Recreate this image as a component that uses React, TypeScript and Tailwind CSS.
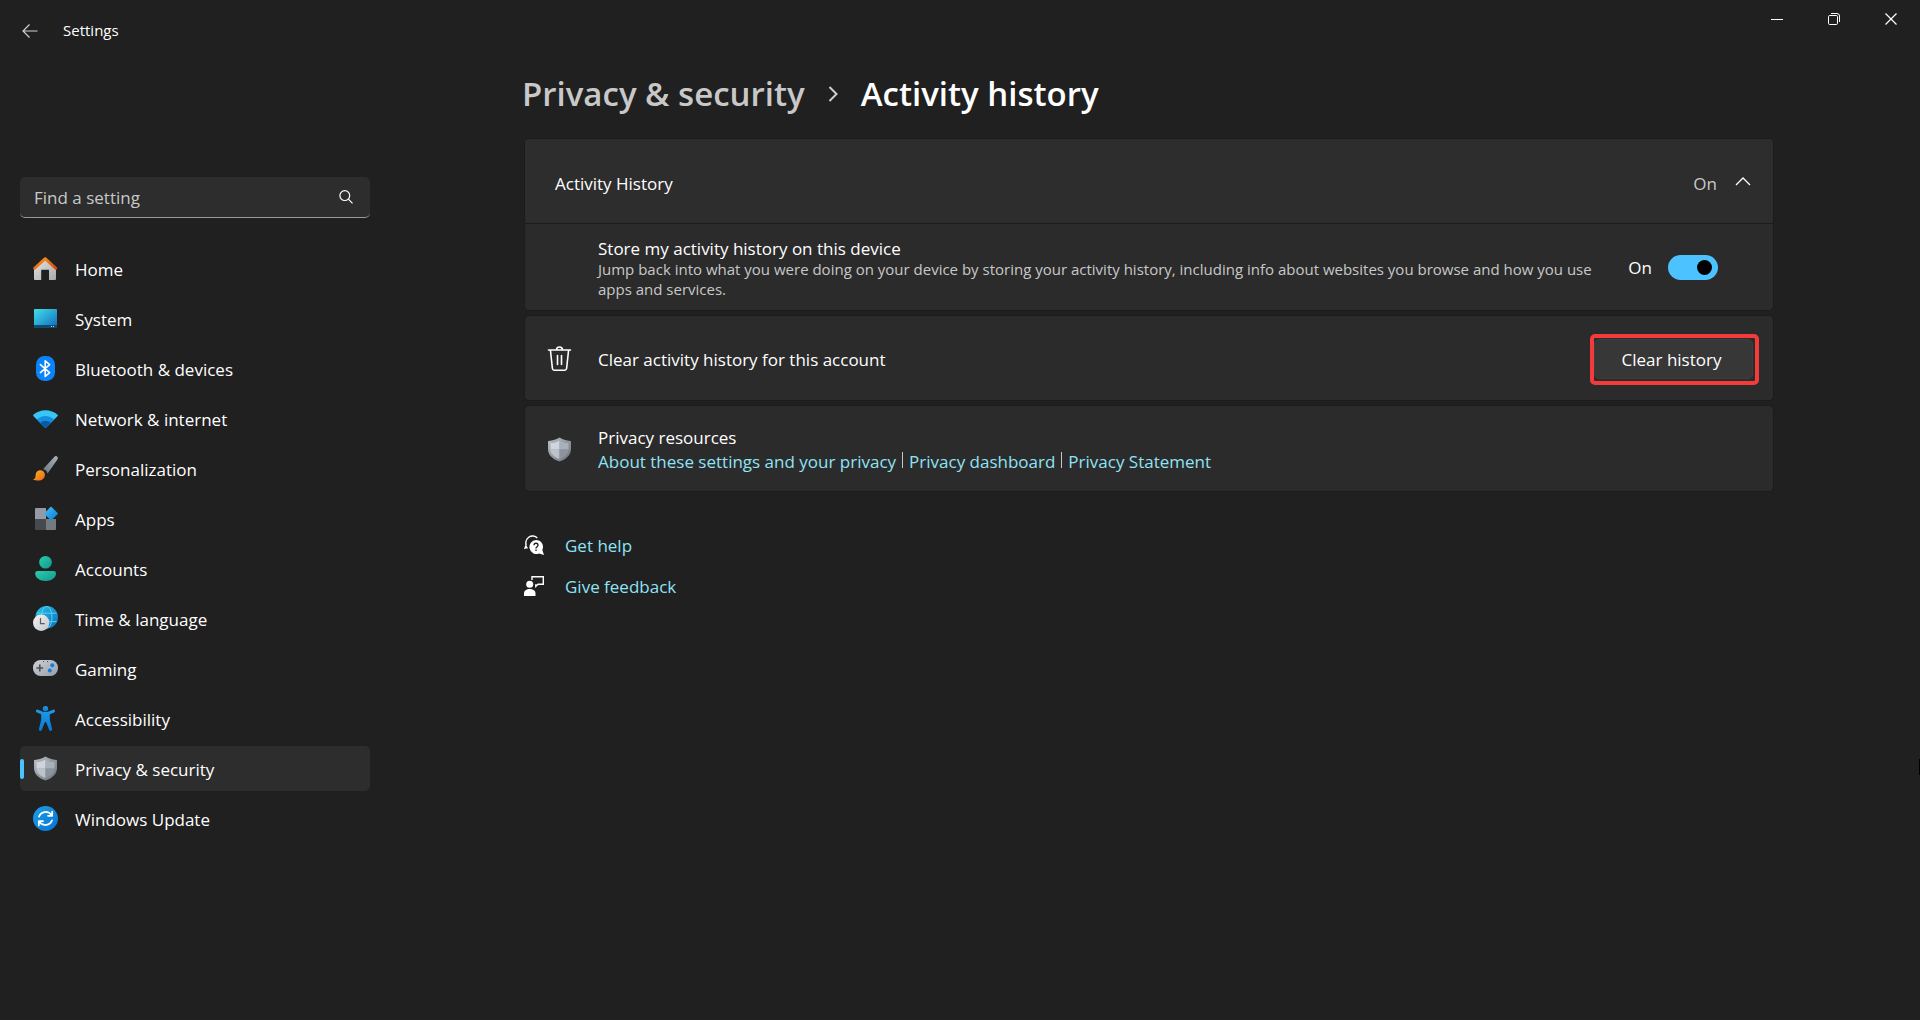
import React, { useState } from 'react';

interface NavItem {
  label: string;
  icon: React.ReactNode;
}

function HomeIcon() {
  return (
    <svg viewBox="0 0 25 25" className="size-[25px]" aria-hidden="true">
      <defs>
        <linearGradient id="home-wall" x1="0" y1="0" x2="1" y2="1">
          <stop offset="0" stopColor="#e4e4e4" />
          <stop offset="1" stopColor="#a8a8a8" />
        </linearGradient>
        <linearGradient id="home-roof" x1="0" y1="0" x2="1" y2="1">
          <stop offset="0" stopColor="#fb9a1c" />
          <stop offset="1" stopColor="#d9480f" />
        </linearGradient>
      </defs>
      <path d="M12.2 3.5 23 13.5V23a1 1 0 0 1-1 1h-6v-9.6a.6.6 0 0 0-.6-.6H8.8a.6.6 0 0 0-.6.6V24H2a1 1 0 0 1-1-1v-9.5z" fill="url(#home-wall)" />
      <path d="M1.6 12.3 12.2 2.6 22.8 12.3" fill="none" stroke="url(#home-roof)" strokeWidth="2.8" strokeLinecap="round" strokeLinejoin="round" />
    </svg>
  );
}

function SystemIcon() {
  return (
    <svg viewBox="0 0 25 25" className="size-[25px]" aria-hidden="true">
      <defs>
        <linearGradient id="sys-screen" x1="0" y1="0" x2="1" y2="1">
          <stop offset="0" stopColor="#3de0e6" />
          <stop offset="0.5" stopColor="#2aa5d4" />
          <stop offset="1" stopColor="#1267b8" />
        </linearGradient>
      </defs>
      <rect x="1" y="3" width="23" height="19" rx="0.8" fill="url(#sys-screen)" />
      <path d="M1 19h23v2.2a.8.8 0 0 1-.8.8H1.8a.8.8 0 0 1-.8-.8z" fill="#0f4a70" />
      <path d="M18 20.5h1M20 20.5h1" stroke="#b8e6f5" strokeWidth="1" />
    </svg>
  );
}

function BluetoothIcon() {
  return (
    <svg viewBox="0 0 25 25" className="size-[25px]" aria-hidden="true">
      <rect x="3" y="0" width="19" height="25" rx="8.5" fill="#0a84f8" />
      <path d="M7.4 8.6 16.6 16.6 12.2 20.4V4.8L16.6 8.6 7.4 16.6" fill="none" stroke="#fff" strokeWidth="1.6" strokeLinejoin="round" strokeLinecap="round" />
    </svg>
  );
}

function NetworkIcon() {
  return (
    <svg viewBox="0 0 25 25" className="size-[25px]" aria-hidden="true">
      <path d="M.4 8.8C7 2.6 18 2.6 24.6 8.8c.4.4.4.8.1 1.1L13.2 21.4a1 1 0 0 1-1.4 0L.3 9.9C0 9.6 0 9.2.4 8.8z" fill="#38c6f4" />
      <path d="M3.9 13.5c4.8-4.8 12.4-4.8 17.2 0l-7.9 7.9a1 1 0 0 1-1.4 0z" fill="#1490df" />
      <path d="M7.3 16.9c2.9-2.9 7.5-2.9 10.4 0l-4.5 4.5a1 1 0 0 1-1.4 0z" fill="#0c59a4" />
    </svg>
  );
}

function PersonalizationIcon() {
  return (
    <svg viewBox="0 0 25 25" className="size-[25px]" aria-hidden="true">
      <defs>
        <linearGradient id="brush-handle" x1="0" y1="1" x2="1" y2="0">
          <stop offset="0" stopColor="#6d757d" />
          <stop offset="1" stopColor="#a9b3bc" />
        </linearGradient>
        <linearGradient id="brush-tip" x1="0" y1="0" x2="1" y2="1">
          <stop offset="0" stopColor="#fcb32c" />
          <stop offset="1" stopColor="#e8670d" />
        </linearGradient>
      </defs>
      <path d="M24.2.6c.8.8.8 1.9.2 2.8L14.6 17.4c-.8-2.3-2.2-3.7-4.4-4.4L21.4.7c.8-.8 2-.9 2.8-.1z" fill="url(#brush-handle)" />
      <path d="M2.6 19.2c.2-3.5 2.5-5.2 5.2-4.9 2.5.3 4.2 2.4 4.1 4.8-.1 3.6-2.8 5.5-6.4 5.5-2.2 0-4.2-.3-5.5-1.1 1.8-.4 2.5-1.9 2.6-4.3z" fill="url(#brush-tip)" />
    </svg>
  );
}

function AppsIcon() {
  return (
    <svg viewBox="0 0 25 25" className="size-[25px]" aria-hidden="true">
      <defs>
        <linearGradient id="apps-diamond" x1="0" y1="0" x2="1" y2="1">
          <stop offset="0" stopColor="#41c4f7" />
          <stop offset="1" stopColor="#0b78d4" />
        </linearGradient>
      </defs>
      <path d="M3 2h10v11H2V3a1 1 0 0 1 1-1z" fill="#969ba3" />
      <path d="M2 13h11v11H3a1 1 0 0 1-1-1z" fill="#46494d" />
      <path d="M13 13h10v10a1 1 0 0 1-1 1h-9z" fill="#747a82" />
      <path d="M18.1.8a.9.9 0 0 1 .6.3l5.9 5.8a.9.9 0 0 1 0 1.3l-5.9 5.9a.9.9 0 0 1-1.3 0l-5.8-5.9a.9.9 0 0 1 0-1.3l5.8-5.8a.9.9 0 0 1 .7-.3z" fill="url(#apps-diamond)" />
    </svg>
  );
}

function AccountsIcon() {
  return (
    <svg viewBox="0 0 25 25" className="size-[25px]" aria-hidden="true">
      <defs>
        <linearGradient id="acct" x1="0" y1="0" x2="1" y2="1">
          <stop offset="0" stopColor="#2bcdb0" />
          <stop offset="1" stopColor="#10988a" />
        </linearGradient>
      </defs>
      <circle cx="12.5" cy="6.3" r="6.3" fill="url(#acct)" />
      <path d="M4.5 15h16.2A2.3 2.3 0 0 1 23 17.3c0 4.6-4.4 7.7-10.4 7.7S2.2 21.9 2.2 17.3A2.3 2.3 0 0 1 4.5 15z" fill="url(#acct)" />
    </svg>
  );
}

function TimeIcon() {
  return (
    <svg viewBox="0 0 25 25" className="size-[25px]" aria-hidden="true">
      <defs>
        <linearGradient id="globe" x1="0" y1="0" x2="1" y2="1">
          <stop offset="0" stopColor="#2cc3e6" />
          <stop offset="1" stopColor="#0f6cc0" />
        </linearGradient>
        <linearGradient id="clock" x1="0" y1="0" x2="1" y2="1">
          <stop offset="0" stopColor="#f4f4f4" />
          <stop offset="1" stopColor="#c4c6c9" />
        </linearGradient>
      </defs>
      <circle cx="13.7" cy="11.3" r="11.3" fill="url(#globe)" />
      <g fill="none" stroke="#4fd6ee" strokeWidth="1">
        <ellipse cx="13.7" cy="11.3" rx="5.3" ry="11" />
        <path d="M3.8 7.2h19.8M3 15.6h20.6" />
      </g>
      <circle cx="8.2" cy="16.8" r="8.2" fill="url(#clock)" />
      <path d="M7.5 12v5.7h4.2" fill="none" stroke="#5a5d61" strokeWidth="1.2" />
    </svg>
  );
}

function GamingIcon() {
  return (
    <svg viewBox="0 0 25 25" className="size-[25px]" aria-hidden="true">
      <defs>
        <linearGradient id="pad" x1="0" y1="0" x2="1" y2="1">
          <stop offset="0" stopColor="#cfd3d8" />
          <stop offset="1" stopColor="#969da5" />
        </linearGradient>
      </defs>
      <rect x="0" y="4" width="25" height="16" rx="7.5" fill="url(#pad)" />
      <path d="M6.8 8.6v6.8M3.4 12h6.8" stroke="#4c5055" strokeWidth="1.6" />
      <circle cx="19.3" cy="9.3" r="2" fill="#0f7fdc" />
      <circle cx="16.8" cy="14.4" r="2" fill="#0f7fdc" />
      <path d="M10 5.6h1M14 5.6h1" stroke="#4c5055" strokeWidth="1" />
    </svg>
  );
}

function AccessibilityIcon() {
  return (
    <svg viewBox="0 0 25 25" className="size-[25px]" aria-hidden="true">
      <defs>
        <linearGradient id="a11y" x1="0" y1="0" x2="0" y2="1">
          <stop offset="0" stopColor="#1d9bea" />
          <stop offset="1" stopColor="#0878d6" />
        </linearGradient>
      </defs>
      <circle cx="12.5" cy="2.8" r="2.7" fill="url(#a11y)" />
      <path d="M3.1 4.6c.3-.8 1.1-1.2 1.9-.9l4.3 1.7c2.1.8 4.3.8 6.4 0L20 3.7c.8-.3 1.6.1 1.9.9.3.8-.1 1.6-.9 1.9l-4.2 1.8v5.5l2.3 9.2c.2.8-.3 1.6-1.1 1.9-.8.2-1.6-.3-1.9-1.1l-2.7-7.1c-.3-.8-1.5-.8-1.8 0l-2.7 7.1c-.3.8-1.1 1.3-1.9 1.1-.8-.3-1.3-1.1-1.1-1.9l2.3-9.2V8.300L4 6.5c-.8-.3-1.2-1.1-.9-1.9z" fill="url(#a11y)" />
    </svg>
  );
}

function ShieldIcon({ id }: { id: string }) {
  return (
    <svg viewBox="0 0 25 25" className="size-[25px]" aria-hidden="true">
      <defs>
        <linearGradient id={id} x1="0" y1="0" x2="1" y2="1">
          <stop offset="0" stopColor="#b9c0c8" />
          <stop offset="1" stopColor="#6a727a" />
        </linearGradient>
      </defs>
      <path d="M12.5.6c2.8 2 6.5 3.2 11 3.3.3 0 .5.2.5.5V12c0 5.8-4.3 10.2-11.5 12.6C5.3 22.2 1 17.8 1 12V4.4c0-.3.2-.5.5-.5C6 3.8 9.7 2.6 12.5.6z" fill={`url(#${id})`} />
      <path d="M12.5 3.4v9.2h-9V6.1c3.5-.2 6.5-1.1 9-2.7z" fill="#d0d5dd" />
      <path d="M12.5 3.4c2.5 1.6 5.5 2.5 9 2.7v6.5h-9z" fill="#a9b0ba" />
      <path d="M3.5 12.5h9v9.6c-5.5-2.2-9-5.5-9-9.6z" fill="#bcc3cc" />
      <path d="M21.5 12.5h-9v9.6c5.5-2.2 9-5.5 9-9.6z" fill="#8c949e" />
    </svg>
  );
}

function UpdateIcon() {
  return (
    <svg viewBox="0 0 25 25" className="size-[25px]" aria-hidden="true">
      <defs>
        <linearGradient id="update" x1="0" y1="0" x2="1" y2="1">
          <stop offset="0" stopColor="#1ea0e6" />
          <stop offset="1" stopColor="#0473d6" />
        </linearGradient>
      </defs>
      <circle cx="12.5" cy="12.5" r="12.5" fill="url(#update)" />
      <g fill="none" stroke="#fff" strokeWidth="1.7" strokeLinecap="round" strokeLinejoin="round">
        <path d="M6 10.6C8 5.3 15 4.2 18.8 9.2M19.2 5.6v4.2H15" />
        <path d="M19 14.4C17 19.7 10 20.8 6.2 15.8M5.8 19.4v-4.2H10" />
      </g>
    </svg>
  );
}

const navItems: NavItem[] = [
  { label: 'Home', icon: <HomeIcon /> },
  { label: 'System', icon: <SystemIcon /> },
  { label: 'Bluetooth & devices', icon: <BluetoothIcon /> },
  { label: 'Network & internet', icon: <NetworkIcon /> },
  { label: 'Personalization', icon: <PersonalizationIcon /> },
  { label: 'Apps', icon: <AppsIcon /> },
  { label: 'Accounts', icon: <AccountsIcon /> },
  { label: 'Time & language', icon: <TimeIcon /> },
  { label: 'Gaming', icon: <GamingIcon /> },
  { label: 'Accessibility', icon: <AccessibilityIcon /> },
  { label: 'Privacy & security', icon: <ShieldIcon id="nav-shield" /> },
  { label: 'Windows Update', icon: <UpdateIcon /> },
];

function TitleBar() {
  return (
    <header className="flex h-[62px] items-start justify-between">
      <div className="flex h-full items-center pl-[22px] text-[15px]">
        <button type="button" aria-label="Back">
          <svg viewBox="0 0 16 16" className="size-4" fill="none" stroke="#d0d0d0" strokeWidth="1.2" aria-hidden="true">
            <path d="M15.5 8H1M7.5 1.5 1 8l6.5 6.5" />
          </svg>
        </button>
        <span className="ml-[25px] pb-0.5">Settings</span>
      </div>
      <div className="flex pr-px">
        <button type="button" aria-label="Minimize" className="flex h-[38px] w-[57px] items-center justify-center">
          <svg viewBox="0 0 12 12" className="size-3" stroke="#fff" aria-hidden="true">
            <path d="M0 6.5h12" />
          </svg>
        </button>
        <button type="button" aria-label="Restore" className="flex h-[38px] w-[57px] items-center justify-center">
          <svg viewBox="0 0 12 12" className="size-3" fill="none" stroke="#fff" aria-hidden="true">
            <rect x="0.5" y="2.5" width="9" height="9" rx="1.2" />
            <path d="M3 .5h6A2.5 2.5 0 0 1 11.5 3v6" />
          </svg>
        </button>
        <button type="button" aria-label="Close" className="flex h-[38px] w-[57px] items-center justify-center">
          <svg viewBox="0 0 12 12" className="size-3" stroke="#fff" strokeWidth="1.2" aria-hidden="true">
            <path d="m.5.5 11 11M11.5.5l-11 11" />
          </svg>
        </button>
      </div>
    </header>
  );
}

function Sidebar() {
  return (
    <aside className="w-[378px] shrink-0 pt-[115px] pr-2 pl-5">
      <div className="flex h-[41px] items-center rounded-[5px] border-b border-[#9a9a9a] bg-[#2d2d2d] pr-[17px] pl-[14px]">
        <input
          type="search"
          aria-label="Find a setting"
          placeholder="Find a setting"
          className="min-w-0 flex-1 bg-transparent pt-0.5 outline-none placeholder:text-[#c8c8c8]"
        />
        <svg viewBox="0 0 14 14" className="size-[14px]" fill="none" stroke="#fff" strokeWidth="1.2" aria-hidden="true">
          <circle cx="5.8" cy="5.6" r="4.9" />
          <path d="m9.4 9.2 4.1 4.1" />
        </svg>
      </div>
      <nav className="mt-7 flex flex-col gap-[5px]">
        {navItems.map((item) => {
          const active = item.label === 'Privacy & security';
          return (
            <a
              key={item.label}
              href="#"
              aria-current={active ? 'page' : undefined}
              className={`relative flex h-[45px] items-center gap-[17px] rounded-[5px] pl-[13px] ${active ? 'bg-[#2d2d2d]' : ''}`}
            >
              {active && <span className="absolute left-0 h-5 w-1 rounded-full bg-[#4cc2ff]" />}
              {item.icon}
              <span className="pt-0.5">{item.label}</span>
            </a>
          );
        })}
      </nav>
    </aside>
  );
}

function Card({ children }: { children: React.ReactNode }) {
  return <section className="rounded-[5px] border border-[#1c1c1c] bg-[#2b2b2b]">{children}</section>;
}

function ActivityCard() {
  const [open, setOpen] = useState(true);
  const [stored, setStored] = useState(true);

  return (
    <Card>
      <button
        type="button"
        aria-expanded={open}
        onClick={() => setOpen(!open)}
        className="flex h-[84px] w-full items-center rounded-t bg-[#2d2d2d] pt-1.5 pr-[22px] pl-[30px]"
      >
        <span className="flex-1 text-left">Activity History</span>
        <span className="text-[#c8c8c8]">On</span>
        <svg viewBox="0 0 16 16" className="mb-1.5 ml-[18px] size-4" fill="none" stroke="#fff" strokeWidth="1.3" aria-hidden="true">
          <path d={open ? 'M1 12l7-7 7 7' : 'M1 5l7 7 7-7'} />
        </svg>
      </button>
      {open && (
        <div className="flex h-[87px] items-center border-t border-[#1c1c1c] pr-[55px] pl-[73px]">
          <div className="flex-1 pt-1">
            <label htmlFor="store-history" className="block leading-5">
              Store my activity history on this device
            </label>
            <p className="max-w-[1008px] text-[15px] leading-5 text-[#c8c8c8]">
              Jump back into what you were doing on your device by storing your activity history, including info about
              websites you browse and how you use apps and services.
            </p>
          </div>
          <span className="pt-0.5">On</span>
          <input
            id="store-history"
            type="checkbox"
            role="switch"
            checked={stored}
            onChange={(e) => setStored(e.target.checked)}
            className="ml-4 flex h-[25px] w-[50px] appearance-none items-center rounded-full bg-[#555555] px-[6px] before:size-[15px] before:rounded-full before:bg-black checked:justify-end checked:bg-[#4cc2ff]"
          />
        </div>
      )}
    </Card>
  );
}

function ClearCard() {
  return (
    <Card>
      <div className="flex h-[84px] items-center pr-[14px] pl-[22px]">
        <svg viewBox="0 0 25 25" className="size-[25px]" fill="none" stroke="#fff" strokeWidth="1.6" strokeLinecap="round" strokeLinejoin="round" aria-hidden="true">
          <path d="M1.5 4h22M3.4 4l2 18.5a2 2 0 0 0 2 1.7h10.2a2 2 0 0 0 2-1.7l2-18.5M9.5 4a3 3 0 0 1 6 0M10.5 9.5v9M14.5 9.5v9" />
        </svg>
        <span className="ml-[26px] flex-1 pt-1">Clear activity history for this account</span>
        <div className="mt-[3px] rounded-[5px] border-4 border-[#f43b3b] pt-px pr-0.5 pb-0.5">
          <button type="button" className="block h-10 w-[159px] rounded-[5px] border border-[#3d3d3d] bg-[#373737] pt-0.5 pr-1">
            Clear history
          </button>
        </div>
      </div>
    </Card>
  );
}

function ResourcesCard() {
  return (
    <Card>
      <div className="flex h-[85px] items-center pt-0.5 pl-[22px]">
        <ShieldIcon id="card-shield" />
        <div className="ml-[26px]">
          <p className="leading-6">Privacy resources</p>
          <p className="flex items-center leading-6 text-[#8fe3f5]">
            <a href="#">About these settings and your privacy</a>
            <span className="mx-1.5 mb-1 h-4 w-px bg-[#c8c8c8]" />
            <a href="#">Privacy dashboard</a>
            <span className="mx-1.5 mb-1 h-4 w-px bg-[#c8c8c8]" />
            <a href="#">Privacy Statement</a>
          </p>
        </div>
      </div>
    </Card>
  );
}

function HelpLinks() {
  return (
    <div className="mt-10 flex flex-col gap-[15px] text-[#8fe3f5]">
      <a href="#" className="flex items-center gap-[21px] leading-6">
        <svg viewBox="0 0 20 20" className="size-5" aria-hidden="true">
          <path d="M13.2 3C11.4.7 7.5.2 4.7 2.2 2 4.2 1.3 7.2 2.3 10" fill="none" stroke="#fff" strokeWidth="1.4" />
          <path d="M1.7 9 0 14l4-.8z" fill="#fff" />
          <path d="M12 5a7 7 0 0 1 6.3 10.1L20 20l-5-1.5A7 7 0 1 1 12 5z" fill="#fff" />
          <path d="M10 10.2c0-2.6 4-2.6 4 0 0 1.5-2 1.500-2 3.200M12 14.600v1.400" fill="none" stroke="#202020" strokeWidth="1.3" />
        </svg>
        <span className="pt-0.5">Get help</span>
      </a>
      <a href="#" className="flex items-center gap-[21px] leading-6">
        <svg viewBox="0 0 20 20" className="size-5" aria-hidden="true">
          <path d="M8 4V.8h11.3v7.4H14l-2.2 2.2V8.2" fill="none" stroke="#fff" strokeWidth="1.4" />
          <circle cx="5.7" cy="8.3" r="3.5" fill="#fff" />
          <path d="M0 20v-2.5C0 14.5 2.5 13 5.700 13s5.800 1.500 5.800 4.500V20z" fill="#fff" />
        </svg>
        <span className="pt-0.5">Give feedback</span>
      </a>
    </div>
  );
}

export default function App() {
  return (
    <div className="relative min-h-screen bg-[#202020] font-['Open_Sans','Noto_Sans',sans-serif] text-[17px] leading-6 text-white">
      <TitleBar />
      <div className="flex">
        <Sidebar />
        <main className="min-w-0 flex-1">
          <div className="mx-auto max-w-[1250px]">
            <h1 className="-ml-0.5 flex items-center pt-[10px] pb-[22px] text-[33px] leading-[44px] font-semibold">
              <a href="#" className="text-[#c8c8c8]">
                Privacy &amp; security
              </a>
              <svg viewBox="0 0 10 16" className="mx-[23px] h-4 w-[10px]" fill="none" stroke="#d0d0d0" strokeWidth="2" aria-hidden="true">
                <path d="m1.5 1 7 7-7 7" />
              </svg>
              <span>Activity history</span>
            </h1>
            <div className="flex flex-col gap-1">
              <ActivityCard />
              <ClearCard />
              <ResourcesCard />
            </div>
            <HelpLinks />
          </div>
        </main>
      </div>
      <span className="absolute top-[759px] right-0 h-4 w-px bg-black" />
    </div>
  );
}
